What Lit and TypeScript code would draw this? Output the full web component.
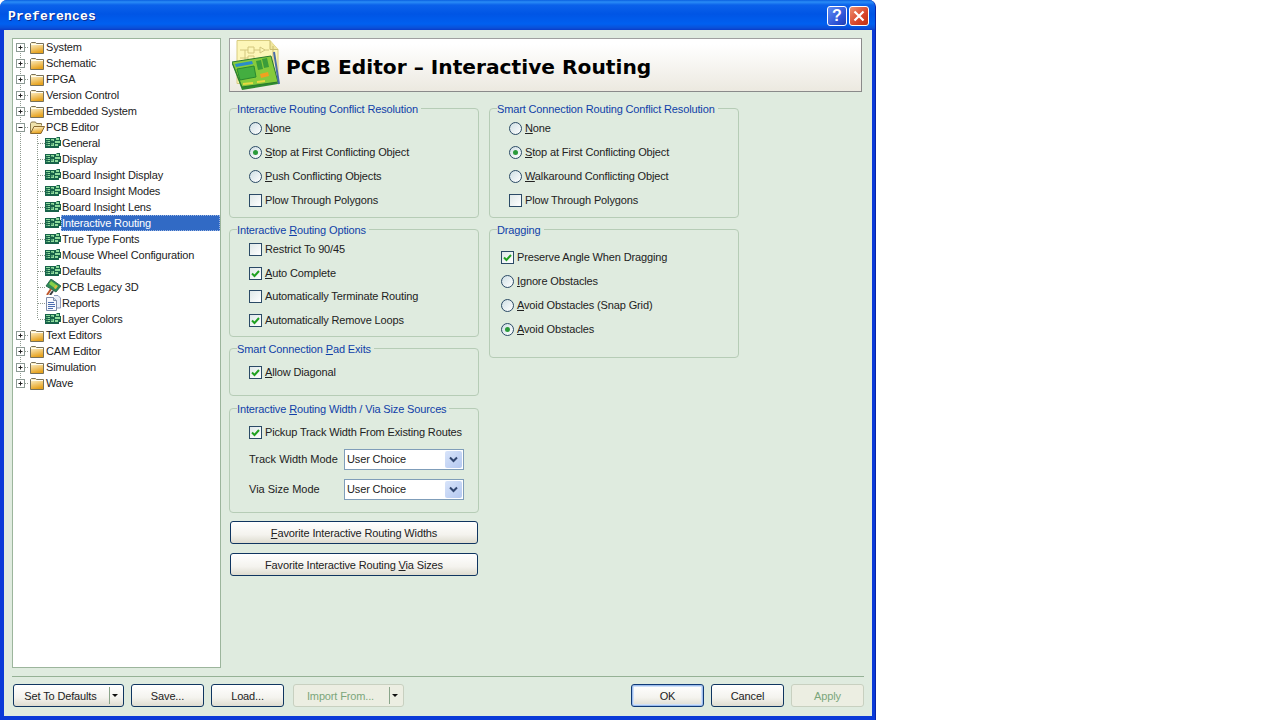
import { LitElement, html, css, svg, nothing } from "lit";
import { customElement } from "lit/decorators.js";

const label = (s: string) => {
  const i = s.indexOf("&");
  if (i < 0) return html`${s}`;
  return html`${s.slice(0, i)}<u>${s[i + 1]}</u>${s.slice(i + 2)}`;
};

type Ctl = { t: "r" | "c"; l: string; on?: boolean; tight?: boolean };
const R = (l: string, on = false): Ctl => ({ t: "r", l, on });
const C = (l: string, on = false, tight = false): Ctl => ({ t: "c", l, on, tight });

type Row = { name: string; kind: "closed" | "open" | "board" | "legacy" | "report"; sel?: boolean; last?: boolean };
const TREE: Row[] = [
  { name: "System", kind: "closed" },
  { name: "Schematic", kind: "closed" },
  { name: "FPGA", kind: "closed" },
  { name: "Version Control", kind: "closed" },
  { name: "Embedded System", kind: "closed" },
  { name: "PCB Editor", kind: "open" },
  { name: "General", kind: "board" },
  { name: "Display", kind: "board" },
  { name: "Board Insight Display", kind: "board" },
  { name: "Board Insight Modes", kind: "board" },
  { name: "Board Insight Lens", kind: "board" },
  { name: "Interactive Routing", kind: "board", sel: true },
  { name: "True Type Fonts", kind: "board" },
  { name: "Mouse Wheel Configuration", kind: "board" },
  { name: "Defaults", kind: "board" },
  { name: "PCB Legacy 3D", kind: "legacy" },
  { name: "Reports", kind: "report" },
  { name: "Layer Colors", kind: "board", last: true },
  { name: "Text Editors", kind: "closed" },
  { name: "CAM Editor", kind: "closed" },
  { name: "Simulation", kind: "closed" },
  { name: "Wave", kind: "closed", last: true },
];

const folder = (open: boolean) => html`<svg class="ico" width="16" height="16" viewBox="0 0 16 16">
  <defs><linearGradient id="fg" x1="0" y1="0" x2="0.3" y2="1"><stop offset="0" stop-color="#fffbe0"/><stop offset="1" stop-color="#e6a21e"/></linearGradient></defs>
  ${open
    ? svg`<path d="M1.5 14V4.500L2.500 3h4l1 1.500h5v2" fill="#efe2ac" stroke="#8a7a50"/><path d="M1.500 14.500L5 7.500h10.500l-3.500 7z" fill="url(#fg)" stroke="#8a6a30"/>`
    : svg`<path d="M1.500 14.500V4.500L2.500 3.500h4l1 1h7v10z" fill="url(#fg)" stroke="#77715a"/><path d="M2 5.500h12" stroke="#fffdf0"/>`}
</svg>`;

const board = html`<svg class="ico" width="16" height="16" viewBox="0 0 16 16">
  <path d="M0 3h11l1-1h3v3h1v6h-2v2H0z" fill="#17634a"/>
  <path d="M1 4h4v1H1zM1 6h4v1H1zM1 8h4v1H1zM1 10h4v1H1zM6 4h3v2H6zM11 3h3v2h-3zM10 6h5v2h-5zM6 8h3v3H6zM10 9h3v2h-3z" fill="#8fdc9c"/>
  <path d="M2 5v6M7 5v5" stroke="#17634a"/>
</svg>`;

const legacy = html`<svg class="ico" width="16" height="16" viewBox="0 0 16 16">
  <path d="M1 7L6 0l10 7-5 6z" fill="#2f8a58" stroke="#1b5a3c" stroke-width="0.800"/>
  <path d="M6 2l7 5-2 3-7-5z" fill="#86cf4a"/>
  <path d="M9 9l2-3 1.500 1-2 3z" fill="#e4b63c"/>
  <path d="M2 16L6 10" stroke="#c0582c" stroke-width="2"/>
  <path d="M5 16L8 12" stroke="#343c40" stroke-width="2"/>
</svg>`;

const report = html`<svg class="ico" width="16" height="16" viewBox="0 0 16 16">
  <path d="M9 0.500h4l2.500 2.500v10H12" fill="#e8eef8" stroke="#8b9abb"/>
  <path d="M1.500 2.500h7l3 3v10h-10z" fill="#f7f9fd" stroke="#7d8ba8"/>
  <path d="M8.500 2.500v3h3" fill="#cdd8ea" stroke="#7d8ba8"/>
  <path d="M3 7.500h6M3 9.500h7M3 11.500h7M3 13.500h5" stroke="#4a6cb0"/>
</svg>`;

const gutter = (r: Row, i: number) => {
  const child = ["board", "legacy", "report"].includes(r.kind);
  const w = child ? 32 : 16;
  const lastTop = i === TREE.length - 1;
  return html`<svg class="gut" width=${w} height="16" viewBox="0 0 ${w} 16">
    <path d="M7.500 ${i === 0 ? 8 : 0}V${lastTop ? 8 : 16}" stroke="#8f9a8f" stroke-dasharray="1 1" fill="none" />
    ${child
      ? svg`<path d="M24.500 0V${r.last ? 8 : 16}M25 8.500H32" stroke="#8f9a8f" stroke-dasharray="1 1" fill="none"/>`
      : svg`<path d="M12 8.500H16" stroke="#8f9a8f" stroke-dasharray="1 1" fill="none"/>
            <rect x="3.500" y="4.500" width="8" height="8" fill="#fff" stroke="#8c9a94"/>
            <path d="M5.500 8.500h4${r.kind === "closed" ? "M7.500 6.500v4" : ""}" stroke="#222"/>`}
  </svg>`;
};

const G1 = { title: "Interactive Routing Conflict Resolution", ctl: [R("&None"), R("&Stop at First Conflicting Object", true), R("&Push Conflicting Objects"), C("Plow Through Polygons")] };
const G2 = { title: "Interactive &Routing Options", ctl: [C("Restrict To 90/45"), C("&Auto Complete", true), C("Automatically Terminate Routing", false, true), C("Automatically Remove Loops", true)] };
const G3 = { title: "Smart Connection &Pad Exits", ctl: [C("&Allow Diagonal", true)] };
const H1 = { title: "Smart Connection Routing Conflict Resolution", ctl: [R("&None"), R("&Stop at First Conflicting Object", true), R("&Walkaround Conflicting Object"), C("Plow Through Polygons")] };
const H2 = { title: "Dragging", ctl: [C("Preserve Angle When Dragging", true), R("&Ignore Obstacles"), R("&Avoid Obstacles (Snap Grid)"), R("&Avoid Obstacles", true)] };

const control = (c: Ctl) => html`<div class="row ${c.tight ? "tight" : ""}">
  ${c.t === "r"
    ? html`<span class="radio">${c.on ? html`<i></i>` : nothing}</span>`
    : html`<span class="check">${c.on
        ? html`<svg width="11" height="11" viewBox="0 0 11 11"><path d="M2 5.500l2.500 2.500L9 3" fill="none" stroke="#21a121" stroke-width="2"/></svg>`
        : nothing}</span>`}
  <span>${label(c.l)}</span>
</div>`;

const select = html`<div class="select"><span>User Choice</span><b>
  <svg width="9" height="7" viewBox="0 0 9 7"><path d="M1 1.500l3.500 3.500L8 1.500" fill="none" stroke="#31466f" stroke-width="2"/></svg>
</b></div>`;

@customElement("app-root")
export class AppRoot extends LitElement {
  static styles = css`
    :host { display: block; width: 1267px; height: 720px; background: #fff; overflow: hidden;
      font: 11px/14px "Liberation Sans", Arial, sans-serif; letter-spacing: -0.14px; color: #222; }
    * { box-sizing: border-box; }
    u { text-decoration-thickness: 1px; text-underline-offset: 1px; }
    .win { width: 876px; height: 720px; display: flex; flex-direction: column;
      background: #0a3ad8; border-radius: 7px 7px 0 0; border-right: 1px solid #0724a8; overflow: hidden; }
    .title { height: 30px; flex: none; display: flex; align-items: center; padding: 2px 6px 0 8px;
      background: linear-gradient(#0a5fe0 0, #2a8cf6 2px, #0b62ea 5px, #0055e5 14px, #0060f0 24px, #0a50d8 28px, #0a3cc8 30px); }
    .title h1 { margin: 2px 0 0; flex: 1; font: bold 13px/16px "Liberation Mono", monospace; letter-spacing: 0.2px;
      color: #fff; text-shadow: 1px 1px #0a2a90; }
    .tb { width: 20px; height: 20px; border: 1px solid #fff; border-radius: 3px; margin-left: 2px;
      display: flex; align-items: center; justify-content: center; color: #fff; }
    .tb.help { background: linear-gradient(135deg, #5f8cf4, #2b50d4 70%, #2040b0); font: bold 16px/18px "Liberation Sans", sans-serif; letter-spacing: 0; }
    .tb.close { background: linear-gradient(135deg, #ee9070, #d8452a 60%, #c03010); }
    .client { flex: 1; margin: 0 3px 4px 4px; background: #dfebdf; padding: 8px 8px 9px 8px;
      display: flex; flex-direction: column; }
    .main { display: flex; gap: 8px; height: 630px; flex: none; }
    .tree { width: 209px; flex: none; background: #fff; border: 1px solid #9cb59c; }
    .node { height: 16px; display: flex; align-items: center; white-space: nowrap; }
    .gut, .ico { flex: none; }
    .node .txt { padding: 0 1px; line-height: 15px; }
    .node.sel .txt { flex: 1; align-self: stretch; background: #316ac5; color: #fff; outline: 1px dotted #9db6e0; outline-offset: -1px; line-height: 16px; }
    .panel { width: 633px; flex: none; }
    .banner { height: 54px; display: flex; align-items: center; gap: 6px; padding-left: 2px;
      background: linear-gradient(#fff 10%, #ece9e0); border: 1px solid #8f8f8f; border-color: #a0a0a0 #8a8a8a #8a8a8a #a0a0a0; }
    .banner h2 { margin: 4px 0 0; font: bold 20.2px/24px "DejaVu Sans", sans-serif; color: #000; letter-spacing: 0; }
    .cols { display: flex; gap: 10px; margin-top: 8px; }
    .col { width: 250px; flex: none; display: flex; flex-direction: column; }
    fieldset { margin: 0; padding: 0 0 0 19px; border: 1px solid #b6ccb6; border-radius: 4px; min-width: 0; }
    legend { padding: 2px 3px 0 0; margin-left: -12px; color: #0f3fa8; line-height: 14px; white-space: nowrap; }
    .g1 { height: 118px; } .g2 { height: 116px; margin-top: 3px; } .g3 { height: 56px; margin-top: 3px; padding-top: 4px; } .g4 { height: 113px; margin-top: 4px; padding-top: 4px; }
    .h1 { height: 118px; } .h2 { height: 137px; margin-top: 3px; padding-left: 11px; padding-top: 8px; }
    .h2 legend { margin-left: -4px; }
    .row { height: 24px; display: flex; align-items: center; gap: 3px; white-space: nowrap; }
    .row.tight { margin-top: -1px; }
    .radio { width: 13px; height: 13px; border-radius: 50%; border: 1px solid #2b4a66; background: linear-gradient(135deg, #cfdfe4, #fff);
      display: flex; align-items: center; justify-content: center; flex: none; }
    .radio i { width: 5px; height: 5px; border-radius: 50%; background: #2a9a3a; }
    .check { width: 13px; height: 13px; border: 1px solid #2b4a66; background: linear-gradient(135deg, #dfe8e8, #fff);
      display: flex; align-items: center; justify-content: center; flex: none; }
    .form { display: flex; flex-direction: column; }
    .frow { display: flex; align-items: center; height: 30px; }
    .frow label { width: 95px; flex: none; letter-spacing: 0; }
    .select { width: 120px; height: 21px; background: #fff; border: 1px solid #7f9db9; padding: 1px 1px 1px 2px;
      display: flex; align-items: center; }
    .select span { flex: 1; }
    .select b { width: 17px; height: 17px; flex: none; border-radius: 2px; background: linear-gradient(135deg, #d8e4fa, #b4c8f0);
      display: flex; align-items: center; justify-content: center; }
    .btn { height: 23px; border: 1px solid #0f3560; border-radius: 3px; background: linear-gradient(#fff, #f4f3ee 60%, #dedcd0);
      display: flex; align-items: center; justify-content: center; white-space: nowrap; }
    .wide { width: 248px; margin-left: 1px; }
    .wide.a { margin-top: 8px; } .wide.b { margin-top: 9px; }
    .sep { height: 1px; background: #95b195; margin: 8px 0 7px 0; flex: none; }
    .foot { display: flex; padding-left: 1px; }
    .spacer { flex: 1; }
    .foot .btn { width: 73px; }
    .foot .btn.m7 { margin-left: 7px; }
    .foot .btn.m9 { margin-left: 9px; }
    .foot .btn.split { width: 111px; padding: 0; justify-content: flex-start; }
    .split .lbl { width: 95px; text-align: center; padding-right: 2px; }
    .split .arr { flex: 1; height: 17px; border-left: 1px solid #8aa58a; display: flex; align-items: center; padding-left: 2px; }
    .split .arr::after { content: ""; border: 3px solid transparent; border-top: 3px solid #111; border-bottom: 0; }
    .btn.dis { border-color: #c8d0c0; color: #7ba67b; background: #eceee2; }
    .btn.ok { box-shadow: inset 0 0 0 1px #9dbdec, inset 0 0 0 2px #cfe0f8; border-color: #0f3a78; }
  `;

  render() {
    return html`<div class="win">
      <div class="title">
        <h1>Preferences</h1>
        <div class="tb help">?</div>
        <div class="tb close"><svg width="12" height="12" viewBox="0 0 12 12"><path d="M1.500 1.500l9 9M10.500 1.500l-9 9" stroke="#fff" stroke-width="2.200"/></svg></div>
      </div>
      <div class="client">
        <div class="main">
          <div class="tree">${TREE.map((r, i) => html`<div class="node ${r.sel ? "sel" : ""}">
            ${gutter(r, i)}
            ${r.kind === "closed" ? folder(false) : r.kind === "open" ? folder(true) : r.kind === "board" ? board : r.kind === "legacy" ? legacy : report}
            <span class="txt">${r.name}</span>
          </div>`)}</div>
          <div class="panel">
            <div class="banner">
              <svg width="48" height="50" viewBox="0 0 48 50">
                <path d="M5 0.500h33l8 9v34H5z" fill="#fdf6b8" stroke="#d8cc80"/>
                <path d="M38 0.500v9h8" fill="#efe59c" stroke="#c8bc70"/>
                <path d="M8 10h8M16 7h6v6h-6zM22 10h6M28 7l5 3-5 3zM33 10h4M13 10v12M8 18h8M16 16h6v5h-6z" fill="none" stroke="#d2c67e"/>
                <path d="M41 6v37" stroke="#c8bc70"/>
                <path d="M0 24L39 18l7 26-36 6z" fill="#2e8a30"/>
                <path d="M0 22L39 16l7 26-36 5z" fill="#86cb3c" stroke="#2a7a30"/>
                <path d="M3 24l17-3 1 3-17 3z" fill="#2a8cc8"/>
                <path d="M5 29l17-3 2 11-16 3z" fill="#43ae40" stroke="#2a8a30"/>
                <path d="M24 21l5-1 2 9-5 1zM30 19l5-1 2 9-5 1z" fill="#3a9c3a"/>
                <path d="M28 34l8-2 1 4-8 2z" fill="#f0a020"/>
                <path d="M42 12l5 32" stroke="#4a6ca8" stroke-width="2"/>
                <path d="M11 44l10-1M25 42l8-1" stroke="#e8d840" stroke-width="2"/>
              </svg>
              <h2>PCB Editor – Interactive Routing</h2>
            </div>
            <div class="cols">
              <div class="col">
                ${this.group("g1", G1)}
                ${this.group("g2", G2)}
                ${this.group("g3", G3)}
                <fieldset class="g4">
                  <legend>${label("Interactive &Routing Width / Via Size Sources")}</legend>
                  ${control(C("Pickup Track Width From Existing Routes", true))}
                  <div class="form">
                    <div class="frow"><label>Track Width Mode</label>${select}</div>
                    <div class="frow"><label>Via Size Mode</label>${select}</div>
                  </div>
                </fieldset>
                <div class="btn wide a"><span>${label("&Favorite Interactive Routing Widths")}</span></div>
                <div class="btn wide b"><span>${label("Favorite Interactive Routing &Via Sizes")}</span></div>
              </div>
              <div class="col">
                ${this.group("h1", H1)}
                ${this.group("h2", H2)}
              </div>
            </div>
          </div>
        </div>
        <div class="sep"></div>
        <div class="foot">
          <div class="btn split"><span class="lbl">Set To Defaults</span><span class="arr"></span></div>
          <div class="btn m7">Save...</div>
          <div class="btn m7">Load...</div>
          <div class="btn split dis m9"><span class="lbl">Import From...</span><span class="arr"></span></div>
          <div class="spacer"></div>
          <div class="btn ok">OK</div>
          <div class="btn m7">Cancel</div>
          <div class="btn dis m7">Apply</div>
        </div>
      </div>
    </div>`;
  }

  group(cls: string, g: { title: string; ctl: Ctl[] }) {
    return html`<fieldset class=${cls}><legend>${label(g.title)}</legend>${g.ctl.map(control)}</fieldset>`;
  }
}
